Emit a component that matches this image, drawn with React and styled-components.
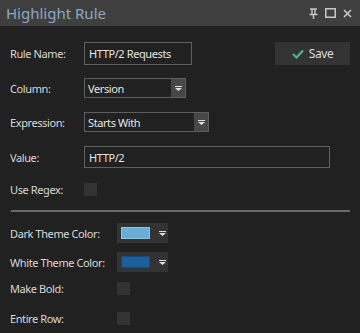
import React from 'react';
import styled, { createGlobalStyle } from 'styled-components';

const GlobalStyle = createGlobalStyle`
  html, body {
    margin: 0;
    padding: 0;
    background: #212121;
  }
  body {
    font-family: "Noto Sans", "Liberation Sans", sans-serif;
  }
`;

const Panel = styled.div`
  width: 360px;
  height: 333px;
  background: #212121;
  overflow: hidden;
`;

const TitleBar = styled.div`
  height: 26px;
  background: #3f3f3f;
  display: flex;
  align-items: center;
  justify-content: space-between;
  padding: 0 8px 0 6px;
  box-sizing: border-box;
`;

const Title = styled.div`
  color: #8ea7c0;
  font-size: 15px;
  line-height: 26px;
`;

const TitleIcons = styled.div`
  display: flex;
  align-items: center;
  gap: 7px;
`;

const Form = styled.div`
  padding: 16px 10px 0 10px;
  font-size: 11px;
  letter-spacing: -0.4px;
`;

const Row = styled.div`
  display: flex;
  align-items: center;
  height: ${p => p.h}px;
  margin-top: ${p => p.mt || 0}px;
`;

const Label = styled.div`
  width: ${p => p.w || 74}px;
  flex-shrink: 0;
  white-space: nowrap;
  color: #d8d8d8;
`;

const TextBox = styled.div`
  width: ${p => p.w}px;
  height: 100%;
  box-sizing: border-box;
  border: 1px solid #606060;
  color: #e4e4e4;
  padding: 0 4px;
  display: flex;
  align-items: center;
  white-space: nowrap;
`;

const SaveButton = styled.div`
  margin-left: auto;
  width: 75px;
  height: 100%;
  background: #333333;
  display: flex;
  align-items: center;
  justify-content: center;
  gap: 5px;
  color: #dcdcdc;
  font-size: 12px;
`;

const Select = styled.div`
  width: ${p => p.w}px;
  height: 100%;
  box-sizing: border-box;
  border: 1px solid #5e5e5e;
  display: flex;
  align-items: stretch;
  color: #e4e4e4;
`;

const SelectText = styled.div`
  flex: 1;
  display: flex;
  align-items: center;
  padding-left: 3px;
`;

const SelectArrow = styled.div`
  width: 14px;
  background: #474747;
  display: flex;
  align-items: center;
  justify-content: center;
`;

const CheckBox = styled.div`
  width: 13px;
  height: 13px;
  background: #333333;
`;

const Divider = styled.div`
  height: 2px;
  background: #6a6a6a;
  margin: 14px 0 0 1px;
`;

const ColorPicker = styled.div`
  width: 51px;
  height: 100%;
  background: #333333;
  display: flex;
  align-items: center;
  padding-left: 4px;
  box-sizing: border-box;
  gap: 9px;
`;

const Swatch = styled.div`
  width: 27px;
  height: 10px;
  background: ${p => p.color};
  border: 1px solid ${p => p.edge};
`;

const Arrow = () => (
  <svg width="7" height="5" viewBox="0 0 7 5">
    <rect x="0" y="0" width="7" height="1" fill="#e0e0e0" />
    <polygon points="0,2 7,2 3.5,5" fill="#e0e0e0" />
  </svg>
);

const Check = () => (
  <svg width="12" height="10" viewBox="0 0 12 10">
    <path d="M1 5 L4.5 8.5 L11 1.5" fill="none" stroke="#4fb587" strokeWidth="2.2" />
  </svg>
);

const App = () => (
  <Panel>
    <GlobalStyle />
    <TitleBar>
      <Title>Highlight Rule</Title>
      <TitleIcons>
        <svg width="9" height="11" viewBox="0 0 9 11">
          <path d="M1 1h7M3 1v5M6 1v5M0.5 6.5h8M4.5 6.5v4.5" stroke="#c8c8c8" strokeWidth="1.4" fill="none" />
        </svg>
        <svg width="11" height="10" viewBox="0 0 11 10">
          <rect x="0.75" y="0.75" width="9.5" height="8.5" stroke="#c8c8c8" strokeWidth="1.5" fill="none" />
        </svg>
        <svg width="9" height="9" viewBox="0 0 9 9">
          <path d="M1 1L8 8M8 1L1 8" stroke="#c8c8c8" strokeWidth="1.6" fill="none" />
        </svg>
      </TitleIcons>
    </TitleBar>
    <Form>
      <Row h={23}>
        <Label>Rule Name:</Label>
        <TextBox w={108}>HTTP/2 Requests</TextBox>
        <SaveButton>
          <Check />
          Save
        </SaveButton>
      </Row>
      <Row h={20} mt={13}>
        <Label>Column:</Label>
        <Select w={102}>
          <SelectText>Version</SelectText>
          <SelectArrow><Arrow /></SelectArrow>
        </Select>
      </Row>
      <Row h={20} mt={14}>
        <Label>Expression:</Label>
        <Select w={125}>
          <SelectText>Starts With</SelectText>
          <SelectArrow><Arrow /></SelectArrow>
        </Select>
      </Row>
      <Row h={22} mt={14}>
        <Label>Value:</Label>
        <TextBox w={246}>HTTP/2</TextBox>
      </Row>
      <Row h={13} mt={15}>
        <Label>Use Regex:</Label>
        <CheckBox />
      </Row>
      <Divider />
      <Row h={20} mt={11}>
        <Label w={107}>Dark Theme Color:</Label>
        <ColorPicker>
          <Swatch color="#6aaed8" edge="#8cc4e6" />
          <Arrow />
        </ColorPicker>
      </Row>
      <Row h={20} mt={9}>
        <Label w={107}>White Theme Color:</Label>
        <ColorPicker>
          <Swatch color="#1d5f98" edge="#174a78" />
          <Arrow />
        </ColorPicker>
      </Row>
      <Row h={13} mt={10}>
        <Label w={107}>Make Bold:</Label>
        <CheckBox />
      </Row>
      <Row h={13} mt={17}>
        <Label w={107}>Entire Row:</Label>
        <CheckBox />
      </Row>
    </Form>
  </Panel>
);

export default App;
